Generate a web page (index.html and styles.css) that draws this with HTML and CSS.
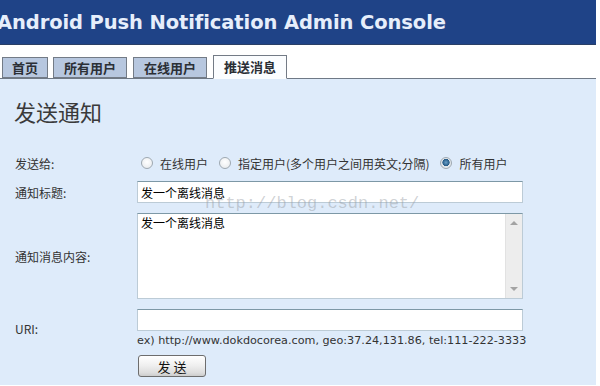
FILE: index.html
```html
<!DOCTYPE html>
<html lang="zh-CN">
<head>
  <meta charset="UTF-8" />
  <title>Android Push Notification Admin Console</title>
  <link rel="stylesheet" href="styles.css">
</head>
<body>
  <div class="page">
    <div class="header">
      <h1>Android Push Notification Admin Console</h1>
    </div>

    <ul class="tabs">
      <li>首页</li>
      <li>所有用户</li>
      <li>在线用户</li>
      <li class="active">推送消息</li>
    </ul>

    <div class="content">
      <h2>发送通知</h2>

      <form class="send-form">
        <div class="row row-target">
          <label class="label">发送给:</label>
          <div class="field radios">
            <label class="radio"><input type="radio" name="broadcast" value="1"> 在线用户</label>
            <label class="radio"><input type="radio" name="broadcast" value="2"> 指定用户(多个用户之间用英文;分隔)</label>
            <label class="radio"><input type="radio" name="broadcast" value="0" checked> 所有用户</label>
          </div>
        </div>

        <div class="row row-title">
          <label class="label" for="title">通知标题:</label>
          <div class="field">
            <input type="text" id="title" class="text" value="发一个离线消息">
          </div>
        </div>

        <div class="row row-message">
          <label class="label" for="message">通知消息内容:</label>
          <div class="field">
            <div class="area-box">
              <textarea id="message" class="area">发一个离线消息</textarea>
              <div class="scrollbar">
                <span class="arrow up"></span>
                <span class="arrow down"></span>
              </div>
            </div>
          </div>
        </div>

        <div class="row row-uri">
          <label class="label" for="uri">URI:</label>
          <div class="field">
            <input type="text" id="uri" class="text">
            <div class="hint">ex) http://www.dokdocorea.com, geo:37.24,131.86, tel:111-222-3333</div>
          </div>
        </div>

        <div class="row row-submit">
          <span class="label"></span>
          <div class="field">
            <button type="submit" class="send-btn">发 送</button>
          </div>
        </div>
      </form>

      <span class="watermark">http://blog.csdn.net/</span>
    </div>
  </div>
</body>
</html>
```

FILE: styles.css
```css
html, body {
  margin: 0;
  padding: 0;
  background: #fff;
  overflow: hidden;
}

body {
  font-family: "Noto Sans CJK SC", sans-serif;
  font-size: 12px;
  color: #333;
}

.page {
  width: 596px;
  height: 386px;
}

.header {
  background: #1f4387;
  height: 45px;
  border-bottom: 1px solid #2a3f66;
  box-sizing: border-box;
  display: flex;
  align-items: center;
}

.header h1 {
  margin: 0 0 0 -3px;
  font-family: "DejaVu Sans", Verdana, sans-serif;
  font-size: 19.5px;
  font-weight: bold;
  color: #e6eefb;
  white-space: nowrap;
  letter-spacing: -0.1px;
}

.tabs {
  list-style: none;
  margin: 0;
  padding: 10px 0 0 2px;
  height: 33px;
  box-sizing: border-box;
  display: flex;
  align-items: flex-end;
  gap: 6px;
  position: relative;
  z-index: 1;
}

.tabs li {
  font-weight: bold;
  font-size: 13px;
  line-height: 19px;
  padding: 0 10px;
  background: #b7c7df;
  border: 1px solid #737b86;
  color: #2b2f36;
}

.tabs li:first-child {
  padding: 0 9px;
  margin-right: -1px;
}

.tabs li.active {
  background: #fbfdff;
  border-bottom-color: #fbfdff;
  line-height: 22px;
  margin-bottom: -1px;
}

.content {
  position: relative;
  background: #deebfa;
  border-top: 1px solid #6f7986;
  height: 307px;
  padding: 19px 0 0 14px;
  box-sizing: border-box;
}

.content h2 {
  margin: 0 0 28px;
  font-size: 22px;
  line-height: 26px;
  font-weight: normal;
  color: #3a3a3a;
}

.row {
  display: flex;
  align-items: center;
}

.label {
  width: 123px;
  padding-left: 1px;
  box-sizing: border-box;
  flex-shrink: 0;
}

.field {
  width: 386px;
}

.row-target {
  height: 22px;
  margin-bottom: 7px;
}

.row-title,
.row-message {
  margin-bottom: 10px;
}

.radios {
  display: flex;
  align-items: center;
  gap: 11px;
  white-space: nowrap;
}

.radio {
  display: flex;
  align-items: center;
  gap: 7px;
}

.radio input {
  appearance: none;
  width: 12px;
  height: 12px;
  margin: 0 0 0 4px;
  border-radius: 50%;
  border: 1px solid #9ea8b1;
  background: radial-gradient(circle at 50% 40%, #ffffff 0%, #e4e7ea 100%);
  box-sizing: border-box;
}

.radio + .radio input {
  margin-left: 0;
}

.radio input:checked {
  background: radial-gradient(circle at 50% 45%, #6aa0c8 0%, #255a86 45%, #dfe4e9 52%, #eef0f2 100%);
}

.text {
  display: block;
  width: 386px;
  height: 22px;
  margin: 0;
  padding: 1px 3px;
  box-sizing: border-box;
  border: 1px solid #bccbd6;
  border-top-color: #7d98a6;
  background: #fff;
  font-family: "Noto Sans CJK SC", sans-serif;
  font-size: 12px;
  color: #000;
}

.area-box {
  display: flex;
  width: 386px;
  height: 86px;
  box-sizing: border-box;
  border: 1px solid #bccbd6;
  border-top-color: #7d98a6;
  background: #fff;
}

.area {
  flex: 1;
  border: none;
  margin: 0;
  padding: 1px 3px;
  resize: none;
  overflow: hidden;
  outline: none;
  font-family: "Noto Sans CJK SC", sans-serif;
  font-size: 12px;
  line-height: 15px;
  color: #000;
}

.scrollbar {
  width: 16px;
  background: #ededed;
  border-left: 1px solid #e2e2e2;
  display: flex;
  flex-direction: column;
  justify-content: space-between;
  align-items: center;
  padding: 7px 0;
}

.arrow {
  width: 0;
  height: 0;
  border-left: 4px solid transparent;
  border-right: 4px solid transparent;
}

.arrow.up {
  border-bottom: 4px solid #a3a3a3;
}

.arrow.down {
  border-top: 4px solid #a3a3a3;
}

.hint {
  margin-top: 3px;
  font-family: "DejaVu Sans", Verdana, sans-serif;
  font-size: 11.2px;
  line-height: 13px;
  color: #333;
  white-space: nowrap;
}

.row-submit {
  margin-top: 8px;
}

.send-btn {
  width: 68px;
  height: 22px;
  margin-left: 1px;
  padding: 0;
  border: 1px solid #6d6d6d;
  border-radius: 3px;
  background: linear-gradient(#ffffff 0%, #f0f0f0 45%, #dcdcdc 85%, #cccccc 100%);
  font-family: "Noto Sans CJK SC", sans-serif;
  font-size: 13px;
  color: #111;
}

.watermark {
  position: absolute;
  left: 205px;
  top: 115px;
  font-family: "Liberation Mono", monospace;
  font-size: 17px;
  color: rgba(150, 156, 162, 0.45);
  pointer-events: none;
}
```
